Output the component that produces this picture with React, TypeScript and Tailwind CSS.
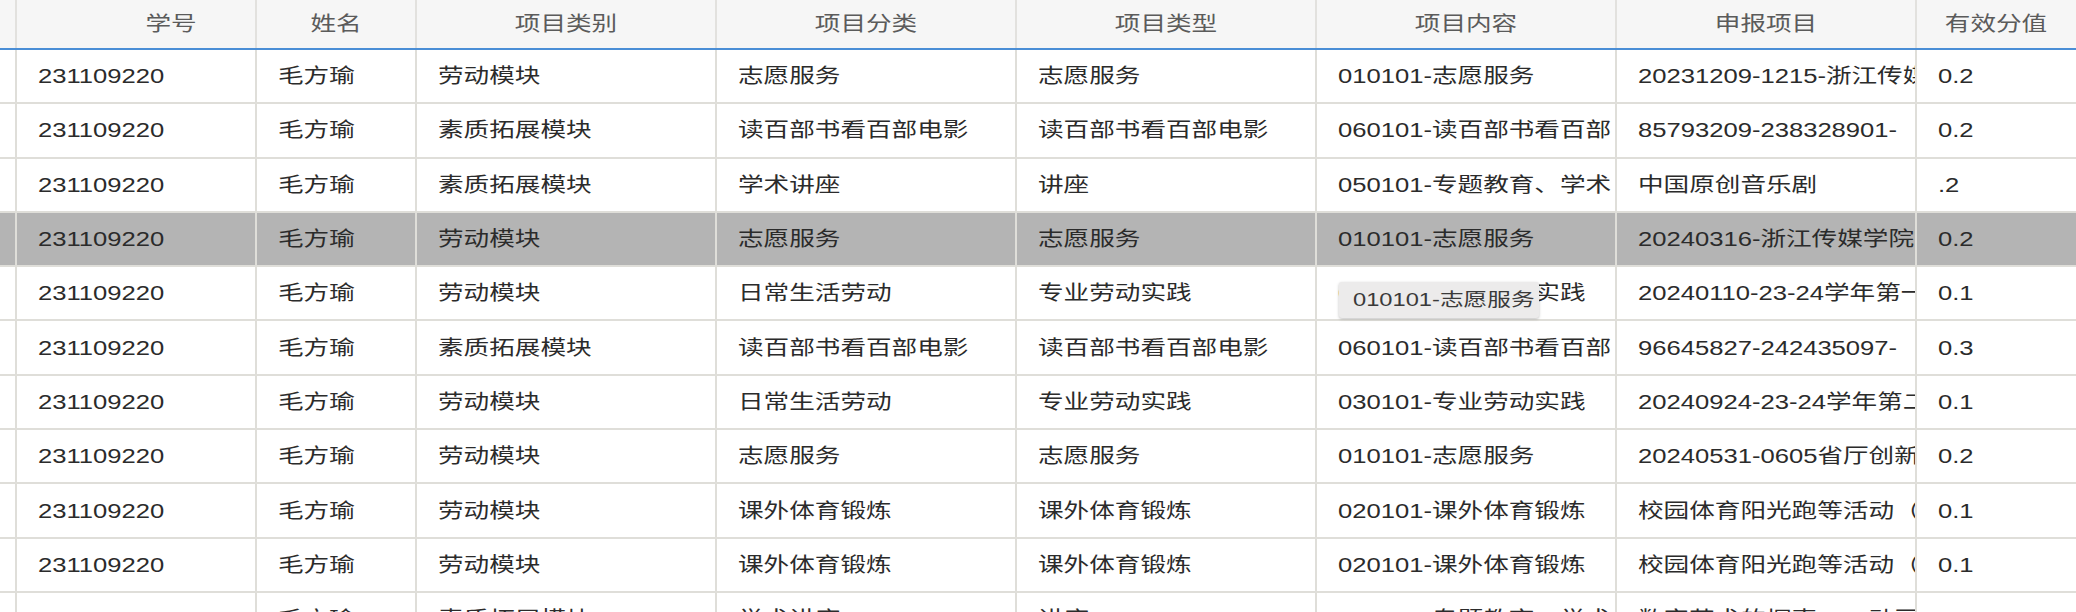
import React from "react";

type Row = {
  id: string;
  name: string;
  category: string;
  group: string;
  type: string;
  content: string;
  project: string;
  score: string;
};

// 项目内容 wraps in the original, so only what fits on the first line shows
const rows: Row[] = [
  { id: "231109220", name: "毛方瑜", category: "劳动模块", group: "志愿服务", type: "志愿服务", content: "010101-志愿服务", project: "20231209-1215-浙江传媒学院志愿服务", score: "0.2" },
  { id: "231109220", name: "毛方瑜", category: "素质拓展模块", group: "读百部书看百部电影", type: "读百部书看百部电影", content: "060101-读百部书看百部", project: "85793209-238328901-", score: "0.2" },
  { id: "231109220", name: "毛方瑜", category: "素质拓展模块", group: "学术讲座", type: "讲座", content: "050101-专题教育、学术", project: "中国原创音乐剧", score: ".2" },
  { id: "231109220", name: "毛方瑜", category: "劳动模块", group: "志愿服务", type: "志愿服务", content: "010101-志愿服务", project: "20240316-浙江传媒学院志愿服务", score: "0.2" },
  { id: "231109220", name: "毛方瑜", category: "劳动模块", group: "日常生活劳动", type: "专业劳动实践", content: "030101-专业劳动实践", project: "20240110-23-24学年第一学期", score: "0.1" },
  { id: "231109220", name: "毛方瑜", category: "素质拓展模块", group: "读百部书看百部电影", type: "读百部书看百部电影", content: "060101-读百部书看百部", project: "96645827-242435097-", score: "0.3" },
  { id: "231109220", name: "毛方瑜", category: "劳动模块", group: "日常生活劳动", type: "专业劳动实践", content: "030101-专业劳动实践", project: "20240924-23-24学年第二学期", score: "0.1" },
  { id: "231109220", name: "毛方瑜", category: "劳动模块", group: "志愿服务", type: "志愿服务", content: "010101-志愿服务", project: "20240531-0605省厅创新创业", score: "0.2" },
  { id: "231109220", name: "毛方瑜", category: "劳动模块", group: "课外体育锻炼", type: "课外体育锻炼", content: "020101-课外体育锻炼", project: "校园体育阳光跑等活动（", score: "0.1" },
  { id: "231109220", name: "毛方瑜", category: "劳动模块", group: "课外体育锻炼", type: "课外体育锻炼", content: "020101-课外体育锻炼", project: "校园体育阳光跑等活动（", score: "0.1" },
  { id: "231109220", name: "毛方瑜", category: "素质拓展模块", group: "学术讲座", type: "讲座", content: "050101-专题教育、学术", project: "数字艺术的探索——动画", score: "0.2" },
];

const widths = ["w-[240px]", "w-[160px]", "w-[300px]", "w-[300px]", "w-[300px]", "w-[300px]", "w-[300px]", "w-[180px]"];
const headers = ["学号", "姓名", "项目类别", "项目分类", "项目类型", "项目内容", "申报项目", "有效分值"];

// the screenshot text is stretched sideways, so every label gets the same squeeze
const Txt = ({ children, center }: { children: React.ReactNode; center?: boolean }) => (
  <span className={`inline-block scale-x-[1.28] ${center ? "origin-center" : "origin-left"}`}>{children}</span>
);

const App: React.FC = () => {
  return (
    <div className="h-[612px] w-full overflow-hidden bg-white font-['Liberation_Sans','Noto_Sans_CJK_SC',sans-serif] text-[20px]">
      <div className="relative w-[2200px]">
        {/* Header */}
        <div className="flex h-[50px] border-b-2 border-[#4a8ed6] bg-[#f6f6f6] text-[#5b5b5b]">
          <div className="w-[17px] shrink-0 border-r-2 border-[#e2e1de]" />
          {headers.map((h, i) => (
            <div
              key={h}
              className={`${widths[i]} flex shrink-0 items-center justify-center overflow-hidden whitespace-nowrap border-r-2 border-[#e2e1de] ${i === 0 ? "pl-[70px]" : ""} ${i === 7 ? "pr-[20px]" : ""}`}
            >
              <Txt center>{h}</Txt>
            </div>
          ))}
        </div>

        {/* Body */}
        {rows.map((r, idx) => {
          const cells = [r.id, r.name, r.category, r.group, r.type, r.content, r.project, r.score];
          const active = idx === 3;
          return (
            <div
              key={idx}
              className={`flex h-[54.3px] border-b-2 border-[#dfded9] text-[#2b2b2b] ${active ? "bg-[#b4b4b4]" : "bg-white"}`}
            >
              <div className="w-[17px] shrink-0 border-r-2 border-[#dfded9]" />
              {cells.map((c, i) => (
                <div
                  key={i}
                  className={`${widths[i]} flex shrink-0 items-center overflow-hidden whitespace-nowrap border-r-2 border-[#dfded9] pl-[21px]`}
                >
                  <Txt>{c}</Txt>
                </div>
              ))}
            </div>
          );
        })}

        {/* Tooltip over the 项目内容 cell */}
        <div className="absolute left-[1339px] top-[282px] flex h-[36px] w-[200px] items-center rounded-[3px] bg-[#ecebeb] pl-[14px] text-[18.5px] text-[#3a3a3a] shadow-[0_1px_3px_rgba(0,0,0,0.25)]">
          <Txt>010101-志愿服务</Txt>
        </div>
      </div>
    </div>
  );
};

export default App;
